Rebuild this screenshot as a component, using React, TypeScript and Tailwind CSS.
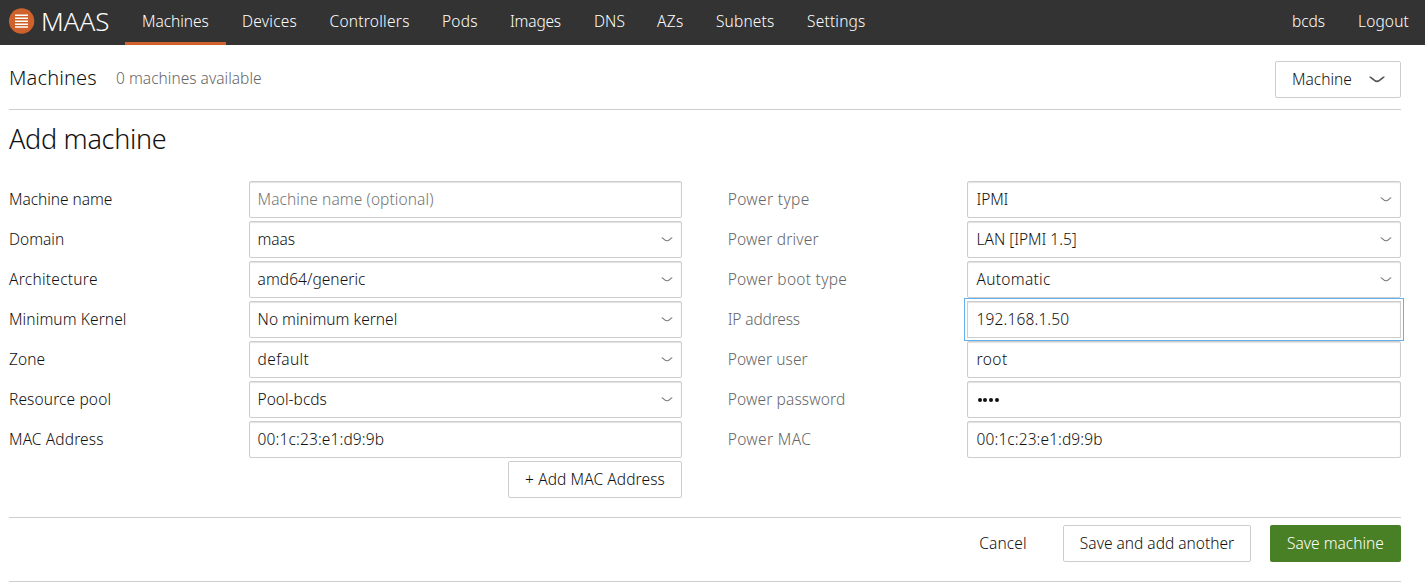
const navItems = [
  { label: 'Machines', box: 'w-[101px] pl-[17px] tracking-[-0.05px]', active: true },
  { label: 'Devices', box: 'w-[87px] pl-4 tracking-[0.25px]' },
  { label: 'Controllers', box: 'w-[112px] pl-[16.5px] tracking-[0.25px]' },
  { label: 'Pods', box: 'w-[68px] pl-[17px] tracking-[0.2px]' },
  { label: 'Images', box: 'w-[84px] pl-[17px] tracking-[-0.2px]' },
  { label: 'DNS', box: 'w-[63px] pl-[17px] tracking-[0.1px]' },
  { label: 'AZs', box: 'w-[59px] pl-[17px] tracking-[0.3px]' },
  { label: 'Subnets', box: 'w-[91px] pl-[17px] tracking-[0.15px]' },
  { label: 'Settings', box: 'w-[93px] pl-[17px] tracking-[0.2px]' },
];

type Kind = 'input' | 'select' | 'placeholder' | 'focused' | 'password';

interface FieldProps {
  label: string;
  labelTracking: string;
  value: string;
  valueTracking: string;
  kind: Kind;
}

const machineFields: FieldProps[] = [
  { label: 'Machine name', labelTracking: 'tracking-[-0.05px]', value: 'Machine name (optional)', valueTracking: 'tracking-[0.08px]', kind: 'placeholder' },
  { label: 'Domain', labelTracking: 'tracking-[0px]', value: 'maas', valueTracking: 'tracking-[-0.1px]', kind: 'select' },
  { label: 'Architecture', labelTracking: 'tracking-[0.27px]', value: 'amd64/generic', valueTracking: 'tracking-[0.05px]', kind: 'select' },
  { label: 'Minimum Kernel', labelTracking: 'tracking-[0.1px]', value: 'No minimum kernel', valueTracking: 'tracking-[0.01px]', kind: 'select' },
  { label: 'Zone', labelTracking: 'tracking-[0.05px]', value: 'default', valueTracking: 'tracking-[0.35px]', kind: 'select' },
  { label: 'Resource pool', labelTracking: 'tracking-[0.13px]', value: 'Pool-bcds', valueTracking: 'tracking-[0px]', kind: 'select' },
  { label: 'MAC Address', labelTracking: 'tracking-[0.12px]', value: '00:1c:23:e1:d9:9b', valueTracking: 'tracking-[0.14px]', kind: 'input' },
];

const powerFields: FieldProps[] = [
  { label: 'Power type', labelTracking: 'tracking-[0.35px]', value: 'IPMI', valueTracking: 'tracking-[-0.2px]', kind: 'select' },
  { label: 'Power driver', labelTracking: 'tracking-[0.17px]', value: 'LAN [IPMI 1.5]', valueTracking: 'tracking-[-0.03px]', kind: 'select' },
  { label: 'Power boot type', labelTracking: 'tracking-[0.27px]', value: 'Automatic', valueTracking: 'tracking-[0.28px]', kind: 'select' },
  { label: 'IP address', labelTracking: 'tracking-[-0.15px]', value: '192.168.1.50', valueTracking: 'tracking-[0.14px]', kind: 'focused' },
  { label: 'Power user', labelTracking: 'tracking-[0.08px]', value: 'root', valueTracking: 'tracking-[0.4px]', kind: 'input' },
  { label: 'Power password', labelTracking: 'tracking-[0.13px]', value: '••••', valueTracking: 'tracking-[0px]', kind: 'password' },
  { label: 'Power MAC', labelTracking: 'tracking-[0.35px]', value: '00:1c:23:e1:d9:9b', valueTracking: 'tracking-[0.1px]', kind: 'input' },
];

function Chevron({ className, thickness }: { className: string; thickness: number }) {
  return (
    <svg viewBox="0 0 16 7" className={className} fill="none" stroke="currentColor">
      <path d="M.6 1C2.8 1 4.8 5.3 8 5.3S13.2 1 15.4 1" strokeWidth={thickness} />
    </svg>
  );
}

function Field({ label, labelTracking, value, valueTracking, kind }: FieldProps) {
  return (
    <div className="flex h-[37px] items-center">
      <span className={`flex-1 pb-px ${labelTracking}`}>{label}</span>
      <div
        className={`flex h-full w-(--field-width) items-center justify-between border border-[#cdcdcd] bg-white pr-2 pl-(--field-pad) shadow-[inset_0_1px_1px_rgba(0,0,0,0.12)] ${
          kind === 'placeholder' ? 'text-[#757575]' : 'text-[#111]'
        } ${kind === 'focused' ? 'z-10 outline outline-offset-2 outline-[#63b0ee]' : 'rounded-xs'}`}
      >
        {kind === 'password' ? (
          <span className="flex gap-[1.8px] pl-px" aria-label="Password">
            {[0, 1, 2, 3].map((dot) => (
              <span key={dot} className="size-1 rounded-full bg-[#111]" />
            ))}
          </span>
        ) : (
          <span className={`pb-px ${valueTracking}`}>{value}</span>
        )}
        {kind === 'select' && <Chevron className="h-[5px] w-3 text-[#777]" thickness={1.5} />}
      </div>
    </div>
  );
}

export default function App() {
  return (
    <div className="h-[585px] overflow-hidden bg-white font-['Noto_Sans',sans-serif] text-[15.5px] leading-6 font-light text-[#111]">
      <header className="flex h-[45px] bg-[#333] text-white">
        <div className="flex w-[125px] shrink-0 items-center pb-[3px] pl-[9px]">
          <svg viewBox="0 0 26 26" className="mr-[6px] size-[26px]">
            <circle cx="12.6" cy="13" r="12.7" fill="#cf622c" />
            <path d="M6 7.3h13M6 10.3h13M6 13.2h13M6 16.2h13M6 19.1h13" stroke="#fff" strokeWidth="1.5" />
          </svg>
          <span className="text-[26px] leading-none tracking-[-0.05px]">MAAS</span>
        </div>
        <nav className="flex">
          {navItems.map((item) => (
            <a
              key={item.label}
              className={`${item.box} border-b-3 pt-[9px] ${item.active ? 'border-[#d0632d]' : 'border-transparent'}`}
            >
              {item.label}
            </a>
          ))}
        </nav>
        <div className="ml-auto flex pt-[9px]">
          <a className="w-[66px] pl-[17px] tracking-[-0.05px]">bcds</a>
          <a className="w-[84px] pl-[17px] tracking-[0.15px]">Logout</a>
        </div>
      </header>

      <main className="ml-[9px] w-[1392px]">
        <div className="flex h-[65px] items-center border-b border-[#cdcdcd]">
          <h1 className="w-[107px] pt-px text-[20px] tracking-[0.15px]">Machines</h1>
          <span className="pt-px text-[#666] tracking-[0.02px]">0 machines available</span>
          <button className="mt-[4px] ml-auto flex h-[37px] w-[126px] items-center justify-between rounded-xs border border-[#cdcdcd] pr-[15px] pl-4">
            Machine
            <Chevron className="mt-px h-[7px] w-4 text-[#555]" thickness={1.7} />
          </button>
        </div>

        <h2 className="h-[71px] pt-[11px] text-[27px] leading-9 tracking-[-0.3px]">Add machine</h2>

        <div className="flex">
          <div className="flex w-[673px] flex-col gap-[3px] [--field-pad:7.6px] [--field-width:433px]">
            {machineFields.map((field) => (
              <Field key={field.label} {...field} />
            ))}
            <button className="h-[37px] w-[174px] self-end rounded-xs border border-[#cdcdcd] pb-[2px] tracking-[0.1px]">
              + Add MAC Address
            </button>
          </div>
          <div className="ml-[45.7px] flex flex-1 flex-col gap-[3px] text-[#666] [--field-pad:8.6px] [--field-width:434px]">
            {powerFields.map((field) => (
              <Field key={field.label} {...field} />
            ))}
          </div>
        </div>

        <div className="mt-[19px] flex h-[65px] justify-end border-y border-[#cdcdcd] pt-[7px]">
          <button className="mr-[19px] h-[37px] w-[82px] pb-[2px] tracking-[0.15px]">Cancel</button>
          <button className="mr-[19px] h-[37px] w-[188px] rounded-xs border border-[#cdcdcd] pb-[2px]">
            Save and add another
          </button>
          <button className="h-[37px] w-[131px] rounded-xs bg-[#4a8025] pb-[2px] text-white">
            Save machine
          </button>
        </div>
      </main>
    </div>
  );
}
